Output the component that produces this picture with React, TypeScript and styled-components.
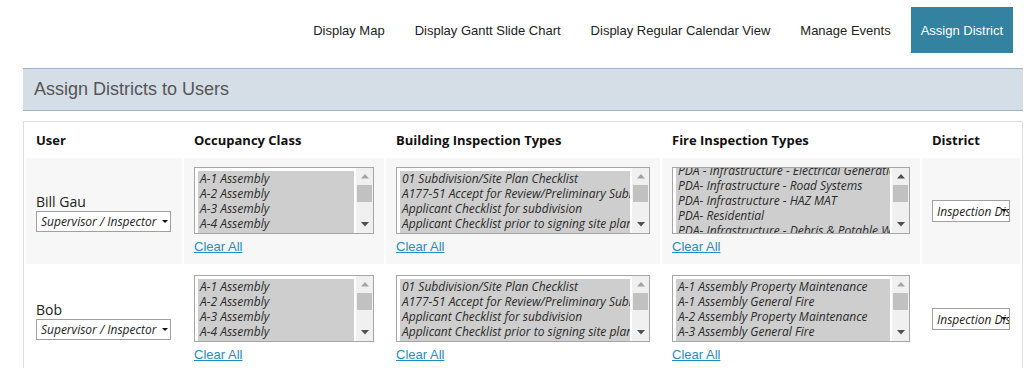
import React from "react";
import styled, { createGlobalStyle } from "styled-components";

const GlobalStyle = createGlobalStyle`
  body {
    margin: 0;
    background: #fff;
    font-family: "Open Sans", "DejaVu Sans", sans-serif;
    color: #222;
  }
`;

const Page = styled.div`
  width: 1032px;
  height: 368px;
  overflow: hidden;
`;

const Nav = styled.nav`
  display: flex;
  justify-content: flex-end;
  padding: 7px 19px 0 0;
`;

const NavItem = styled.a<{ $active?: boolean }>`
  display: flex;
  align-items: center;
  height: 46px;
  padding: 0 ${(p) => (p.$active ? "10px" : "15px")};
  margin-left: ${(p) => (p.$active ? "5px" : "0")};
  font-family: "Liberation Sans", Arial, sans-serif;
  font-size: 13px;
  color: ${(p) => (p.$active ? "#fff" : "#222")};
  background: ${(p) => (p.$active ? "#3282a0" : "transparent")};
  text-decoration: none;
  cursor: pointer;
`;

const Panel = styled.section`
  width: 1000px;
  margin: 15px 0 0 23px;
`;

const PanelHeader = styled.div`
  height: 41px;
  display: flex;
  align-items: center;
  padding-left: 11px;
  background: #d5dde6;
  border-top: 1px solid #9fb3c8;
  border-bottom: 1px solid #9fb3c8;
  font-family: "Liberation Sans", Arial, sans-serif;
  font-size: 18px;
  color: #555;
`;

const Grid = styled.div`
  margin-top: 10px;
  display: grid;
  grid-template-columns: 156px 200px 274px 258px 98px;
  grid-template-rows: 32px;
  grid-auto-rows: 106px;
  gap: 2px;
  padding: 2px;
  border: 1px solid #ddd;
  border-bottom: none;
`;

const HeadCell = styled.div`
  display: flex;
  align-items: center;
  padding-left: 10px;
  font-size: 13px;
  font-weight: 700;
  color: #111;
`;

const Cell = styled.div<{ $striped?: boolean }>`
  background: ${(p) => (p.$striped ? "#f7f7f7" : "#fff")};
  padding: 9px 10px 0;
  box-sizing: border-box;
`;

const UserCell = styled(Cell)`
  display: flex;
  flex-direction: column;
  justify-content: center;
  padding-top: 2px;
`;

const DistrictCell = styled(Cell)`
  display: flex;
  align-items: center;
  padding-top: 0;
`;

const UserName = styled.div`
  font-size: 14px;
  line-height: 18px;
  color: #222;
`;

const SelectBox = styled.div<{ $width: number; $height: number }>`
  position: relative;
  width: ${(p) => p.$width}px;
  height: ${(p) => p.$height}px;
  box-sizing: border-box;
  border: 1px solid #a0a0a0;
  background: #fff;
  display: flex;
  align-items: center;
  padding-left: 4px;
  overflow: hidden;
  white-space: nowrap;
  font-size: 12px;
  font-style: italic;
  color: #222;
`;

const Caret = styled.span`
  position: absolute;
  right: 2px;
  top: 8px;
  width: 0;
  height: 0;
  border-left: 3px solid transparent;
  border-right: 3px solid transparent;
  border-top: 3px solid #111;
`;

const ListBox = styled.div<{ $width: number }>`
  width: ${(p) => p.$width}px;
  height: 67px;
  box-sizing: border-box;
  border: 1px solid #a6a6a6;
  background: #fff;
  display: flex;
`;

const Options = styled.div`
  flex: 1;
  min-width: 0;
  overflow: hidden;
  padding: 3px 2px 0 3px;
`;

const Option = styled.div`
  background: #cecece;
  height: 15px;
  line-height: 15px;
  padding-left: 2px;
  font-size: 12px;
  font-style: italic;
  color: #2a2a2a;
  white-space: nowrap;
  overflow: hidden;
`;

const ScrollBar = styled.div`
  width: 17px;
  background: #f0f0f0;
  display: flex;
  flex-direction: column;
  align-items: center;
`;

const Arrow = styled.div`
  height: 17px;
  display: flex;
  align-items: center;
  justify-content: center;
`;

const Thumb = styled.div`
  width: 15px;
  height: 17px;
  background: #c1c1c1;
`;

const Track = styled.div`
  flex: 1;
`;

const ClearLink = styled.a`
  display: inline-block;
  margin-top: 3px;
  font-family: "Liberation Sans", Arial, sans-serif;
  font-size: 13px;
  color: #1f8dc4;
  text-decoration: underline;
  cursor: pointer;
`;

const Tri: React.FC<{ down?: boolean; dark?: boolean }> = ({ down, dark }) => (
  <svg width="8" height="5" viewBox="0 0 8 5">
    <path
      d={down ? "M0 0 L8 0 L4 4.5 Z" : "M0 4.5 L8 4.5 L4 0 Z"}
      fill={dark ? "#505050" : "#a3a3a3"}
    />
  </svg>
);

type ListProps = {
  width: number;
  items: string[];
  offset?: number;
};

const List: React.FC<ListProps> = ({ width, items, offset = 0 }) => (
  <>
    <ListBox $width={width}>
      <Options>
        <div style={{ marginTop: -offset }}>
          {items.map((it) => (
            <Option key={it}>{it}</Option>
          ))}
        </div>
      </Options>
      <ScrollBar>
        <Arrow>
          <Tri dark={offset > 0} />
        </Arrow>
        <Thumb />
        <Track />
        <Arrow>
          <Tri down dark />
        </Arrow>
      </ScrollBar>
    </ListBox>
    <ClearLink>Clear All</ClearLink>
  </>
);

const occupancy = [
  "A-1 Assembly",
  "A-2 Assembly",
  "A-3 Assembly",
  "A-4 Assembly",
  "A-5 Assembly",
];

const building = [
  "01 Subdivision/Site Plan Checklist",
  "A177-51 Accept for Review/Preliminary Submittal",
  "Applicant Checklist for subdivision",
  "Applicant Checklist prior to signing site plan",
  "Pre-Building Check Sheet",
];

const fireA = [
  "PDA - Infrastructure - Electrical Generation",
  "PDA- Infrastructure - Road Systems",
  "PDA- Infrastructure - HAZ MAT",
  "PDA- Residential",
  "PDA- Infrastructure - Debris & Potable Water",
];

const fireB = [
  "A-1 Assembly Property Maintenance",
  "A-1 Assembly General Fire",
  "A-2 Assembly Property Maintenance",
  "A-3 Assembly General Fire",
  "B2 Business Fire",
];

const users = [
  { name: "Bill Gau", striped: true, fire: fireA, fireOffset: 8 },
  { name: "Bob", striped: false, fire: fireB, fireOffset: 0 },
];

const App: React.FC = () => (
  <Page>
    <GlobalStyle />
    <Nav>
      <NavItem>Display Map</NavItem>
      <NavItem>Display Gantt Slide Chart</NavItem>
      <NavItem>Display Regular Calendar View</NavItem>
      <NavItem>Manage Events</NavItem>
      <NavItem $active>Assign District</NavItem>
    </Nav>
    <Panel>
      <PanelHeader>Assign Districts to Users</PanelHeader>
      <Grid>
        <HeadCell>User</HeadCell>
        <HeadCell>Occupancy Class</HeadCell>
        <HeadCell>Building Inspection Types</HeadCell>
        <HeadCell>Fire Inspection Types</HeadCell>
        <HeadCell>District</HeadCell>
        {users.map((u) => (
          <React.Fragment key={u.name}>
            <UserCell $striped={u.striped}>
              <UserName>{u.name}</UserName>
              <SelectBox $width={135} $height={21}>
                Supervisor / Inspector
                <Caret />
              </SelectBox>
            </UserCell>
            <Cell $striped={u.striped}>
              <List width={180} items={occupancy} />
            </Cell>
            <Cell $striped={u.striped}>
              <List width={254} items={building} />
            </Cell>
            <Cell $striped={u.striped}>
              <List width={238} items={u.fire} offset={u.fireOffset} />
            </Cell>
            <DistrictCell $striped={u.striped}>
              <SelectBox $width={78} $height={22}>
                Inspection District
                <Caret />
              </SelectBox>
            </DistrictCell>
          </React.Fragment>
        ))}
      </Grid>
    </Panel>
  </Page>
);

export default App;
